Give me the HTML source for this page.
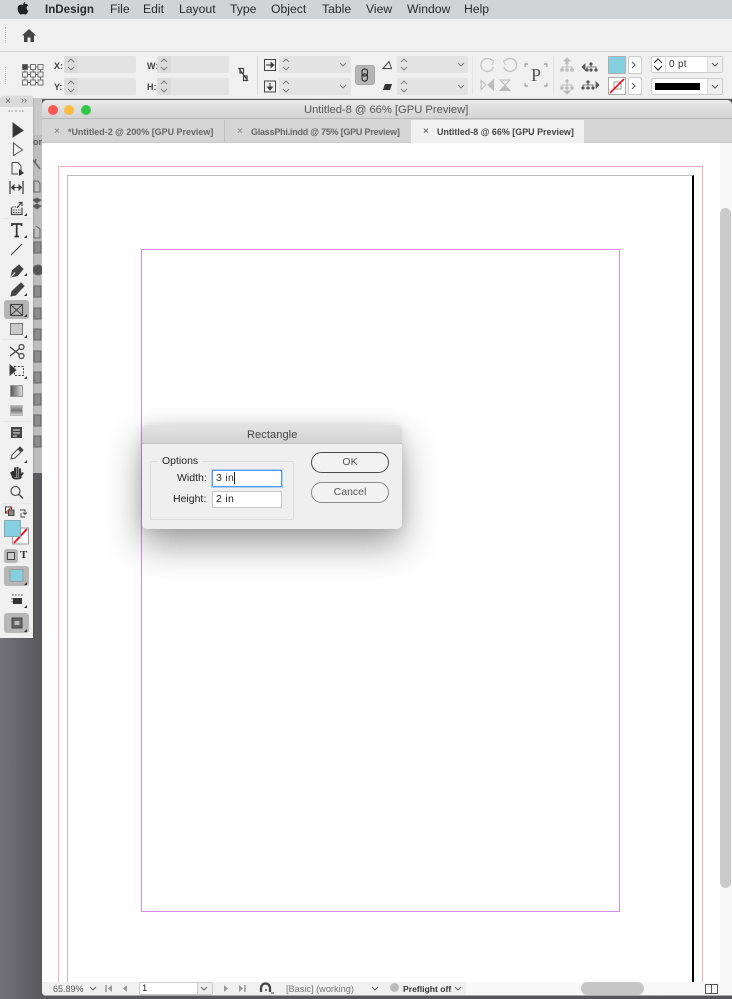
<!DOCTYPE html>
<html><head><meta charset="utf-8">
<style>
*{box-sizing:border-box}
html,body{margin:0;padding:0;width:732px;height:999px;overflow:hidden}
body{position:relative;background:linear-gradient(90deg,#737376,#59595c 42px,#555557);font-family:"Liberation Sans",sans-serif;color:#333}
.a{position:absolute}
.t{position:absolute;white-space:nowrap}
.menu{font-size:12.2px;color:#2a2a2a;top:2px;line-height:15px}
.f{position:absolute;background:#e3e3e3;border-radius:2px}
.lab{position:absolute;font-size:9px;font-weight:bold;color:#444;line-height:10px}
.tab{position:absolute;top:120px;height:23px;font-size:8.95px;font-weight:bold;color:#666;line-height:24px;white-space:nowrap}
svg{position:absolute;overflow:visible}
</style></head><body>
<!-- menu bar -->
<div class="a" style="left:0;top:0;width:732px;height:19px;background:#d2d3d5"></div>
<svg style="left:17px;top:1px" width="12" height="15" viewBox="0 0 12 15"><path d="M8.2 1C7 1.200 6.200 2.200 6.200 3.400 7.400 3.400 8.300 2.300 8.200 1ZM6.100 4C5.300 4 4.900 3.600 4 3.600 2 3.600.6 5.200.6 7.500c0 2.600 1.800 6 3.300 6 .8 0 1.200-.5 2.200-.5s1.300.5 2.200.5c1.300 0 2.600-2.200 3.100-3.800-2.300-1-2.500-4.300-.2-5.500-.6-1-1.700-1.500-2.700-1.500-1 0-1.600.4-2.400.4Z" fill="#222"/></svg>
<div class="t menu" style="left:45px;font-weight:bold;font-size:11.6px">InDesign</div>
<div class="t menu" style="left:110px">File</div>
<div class="t menu" style="left:143px">Edit</div>
<div class="t menu" style="left:179px">Layout</div>
<div class="t menu" style="left:230px">Type</div>
<div class="t menu" style="left:271px">Object</div>
<div class="t menu" style="left:322px">Table</div>
<div class="t menu" style="left:366px">View</div>
<div class="t menu" style="left:407px">Window</div>
<div class="t menu" style="left:464px">Help</div>
<!-- app bar -->
<div class="a" style="left:0;top:19px;width:732px;height:33px;background:#f0f0f0;border-bottom:1px solid #d0d0d0"></div>
<div class="a" style="left:5px;top:27px;height:16px;border-left:1px dotted #bbb"></div>
<svg style="left:21px;top:28px" width="16" height="15" viewBox="0 0 16 15"><path d="M8 1 1 7.500H3V14H6.500V9.500H9.500V14H13V7.500H15Z" fill="#444"/></svg>
<!-- control bar -->
<div class="a" style="left:0;top:52px;width:732px;height:47px;background:#f0f0f0;border-bottom:1px solid #d8d8d8"></div>
<div class="a" style="left:5px;top:67px;height:17px;border-left:1px dotted #bbb"></div>
<svg style="left:22px;top:64px" width="22" height="22" viewBox="0 0 22 22" fill="none" stroke="#666" stroke-width=".9"><rect x=".5" y=".5" width="5" height="5" fill="#444"/><rect x="8.500" y=".5" width="5" height="5"/><rect x="16" y=".5" width="5" height="5"/><rect x=".5" y="8" width="5" height="5"/><rect x="8.500" y="8" width="5" height="5"/><rect x="16" y="8" width="5" height="5"/><rect x=".5" y="16" width="5" height="5"/><rect x="8.500" y="16" width="5" height="5"/><rect x="16" y="16" width="5" height="5"/><path d="M5.500 3H8.500M13.500 3H16M5.500 10.500H8.500M13.500 10.500H16M5.500 18.500H8.500M13.500 18.500H16M3 5.500V8M3 13V16M11 5.500V8M11 13V16M18.500 5.500V8M18.500 13V16"/></svg>
<div class="lab" style="left:54px;top:61px">X:</div><div class="lab" style="left:54px;top:82px">Y:</div>
<div class="lab" style="left:147px;top:61px">W:</div><div class="lab" style="left:147px;top:82px">H:</div>
<div class="f" style="left:64px;top:56px;width:72px;height:17px"></div><div class="f" style="left:64px;top:78px;width:72px;height:17px"></div>
<div class="f" style="left:157px;top:56px;width:72px;height:17px"></div><div class="f" style="left:157px;top:78px;width:72px;height:17px"></div>
<div class="f" style="left:279px;top:56px;width:72px;height:17px"></div><div class="f" style="left:279px;top:78px;width:72px;height:17px"></div>
<div class="f" style="left:397px;top:56px;width:71px;height:17px"></div><div class="f" style="left:397px;top:78px;width:71px;height:17px"></div>
<div class="f" style="left:64px;top:56px;width:14px;height:17px;background:#dcdcdc"></div><div class="f" style="left:64px;top:78px;width:14px;height:17px;background:#dcdcdc"></div>
<div class="f" style="left:157px;top:56px;width:14px;height:17px;background:#dcdcdc"></div><div class="f" style="left:157px;top:78px;width:14px;height:17px;background:#dcdcdc"></div>
<svg style="left:0;top:0" width="732" height="100" fill="none" stroke="#777" stroke-width=".9">
<path d="M68 62 71 59 74 62M68 67 71 70 74 67M68 84 71 81 74 84M68 89 71 92 74 89M161 62 164 59 167 62M161 67 164 70 167 67M161 84 164 81 167 84M161 89 164 92 167 89M283 62 286 59 289 62M283 67 286 70 289 67M283 84 286 81 289 84M283 89 286 92 289 89M401 62 404 59 407 62M401 67 404 70 407 67M401 84 404 81 407 84M401 89 404 92 407 89"/>
<path d="M340 63 343 66 346 63M340 85 343 88 346 85M458 63 461 66 464 63M458 85 461 88 464 85"/>
</svg>
<svg style="left:237px;top:67px" width="13" height="15" viewBox="0 0 13 15" fill="none" stroke="#444" stroke-width="1.200"><path d="M3 1.500H6.500V6H3ZM6.500 9H10V13.500H6.500ZM1.500 1 11 14"/></svg>
<div class="a" style="left:257px;top:56px;height:39px;border-left:1px solid #dcdcdc"></div>
<svg style="left:264px;top:59px" width="12" height="34" viewBox="0 0 12 34" fill="none" stroke="#444"><rect x=".5" y=".5" width="11" height="11"/><rect x=".5" y="22" width="11" height="11"/><path d="M2 6H9" stroke-width="1.200"/><path d="M7 3.500 10 6 7 8.500Z" fill="#333"/><path d="M6 24V30" stroke-width="1.200"/><path d="M3.500 28 6 31 8.500 28Z" fill="#333"/></svg>
<div class="a" style="left:355px;top:65px;width:20px;height:20px;background:#b5b5b5;border-radius:3px;border:1px solid #a8a8a8"></div>
<svg style="left:361px;top:68px" width="8" height="14" viewBox="0 0 8 14" fill="none" stroke="#333" stroke-width="1.200"><rect x="1" y="1" width="5.500" height="7" rx="2.500"/><rect x="1" y="6" width="5.500" height="7" rx="2.500"/></svg>
<svg style="left:382px;top:60px" width="11" height="32" viewBox="0 0 11 32"><path d="M1 8.500H9.500L7 1.500Z" fill="none" stroke="#444" stroke-width="1"/><path d="M3 24H10L8 30H1Z" fill="#333"/></svg>
<div class="a" style="left:472px;top:56px;height:39px;border-left:1px solid #e4e4e4"></div>
<svg style="left:480px;top:56px" width="72" height="40" viewBox="0 0 72 40" fill="none" stroke="#c4c4c4" stroke-width="1.300"><path d="M12.500 5A6.500 6.500 0 1 0 13.500 11"/><path d="M10 3 14 5 12 9" stroke-width="1"/><path d="M25 5A6.500 6.500 0 1 1 24 11"/><path d="M27.500 3 23.500 5 25.500 9" stroke-width="1"/><path d="M1 24.500 6 29 1 33.500Z" stroke="#bbb" stroke-width="1"/><path d="M13.500 24 8 29 13.500 34Z" fill="#bbb" stroke="#bbb" stroke-width="1"/><path d="M20 24H30L25 29Z" stroke="#bbb" stroke-width="1"/><path d="M25 29.500 20 34.500H30Z" fill="#bbb" stroke="#bbb" stroke-width="1"/></svg>
<svg style="left:525px;top:63px" width="22" height="24" viewBox="0 0 22 24" fill="none" stroke="#888" stroke-width=".9"><path d="M0 4V1H3M19 1H22V4M0 20V23H3M19 23H22V20"/></svg>
<div class="t" style="left:531px;top:65px;font:18px 'Liberation Serif',serif;color:#555;line-height:20px">P</div>
<div class="a" style="left:553px;top:56px;height:39px;border-left:1px solid #e4e4e4"></div>
<svg style="left:560px;top:56px" width="44" height="40" viewBox="0 0 44 40">
<g fill="#bbb" stroke="#bbb"><path d="M7 2 10 5H4Z"/><circle cx="7" cy="7" r="1.200"/><path d="M7 8V11M2 13V11H12V13" fill="none"/><circle cx="2" cy="14" r="1.300"/><circle cx="7" cy="14" r="1.300"/><circle cx="12" cy="14" r="1.300"/>
<circle cx="7" cy="25" r="1.200"/><path d="M7 26V29M2 31V29H12V31" fill="none"/><circle cx="2" cy="32" r="1.300"/><circle cx="7" cy="32" r="1.300"/><circle cx="12" cy="32" r="1.300"/><path d="M4 35H10L7 38Z"/></g>
<g fill="#555" stroke="#555" stroke-width=".8"><circle cx="31" cy="8" r="1.200"/><path d="M31 9V11M27 13V11H36V13" fill="none"/><circle cx="27" cy="14" r="1.200"/><circle cx="31" cy="14" r="1.200"/><circle cx="36" cy="14" r="1.200"/><path d="M22 11 25 8V14Z"/>
<circle cx="28" cy="26" r="1.200"/><path d="M28 27V29M23 31V29H33V31" fill="none"/><circle cx="23" cy="32" r="1.200"/><circle cx="28" cy="32" r="1.200"/><circle cx="33" cy="32" r="1.200"/><path d="M39 29 36 26V32Z"/></g></svg>
<div class="a" style="left:608px;top:56px;width:18px;height:18px;background:#86cfdf;border:1px solid #b0b0b0"></div>
<div class="a" style="left:608px;top:77px;width:18px;height:18px;background:#fff;border:1px solid #aaa"></div>
<svg style="left:608px;top:77px" width="18" height="18" viewBox="0 0 18 18" fill="none"><rect x="6" y="5" width="7" height="7" stroke="#999"/><path d="M2 16 16 2" stroke="#f01020" stroke-width="1.600"/></svg>
<div class="a" style="left:628px;top:56px;width:14px;height:18px;background:#fff;border:1px solid #ccc;border-radius:2px"></div>
<div class="a" style="left:628px;top:77px;width:14px;height:18px;background:#fff;border:1px solid #ccc;border-radius:2px"></div>
<div class="a" style="left:651px;top:56px;width:72px;height:17px;background:#fff;border:1px solid #ccc;border-radius:2px"></div>
<div class="a" style="left:651px;top:78px;width:72px;height:17px;background:#fff;border:1px solid #ccc;border-radius:2px"></div>
<div class="a" style="left:665px;top:57px;width:1px;height:15px;background:#ddd"></div>
<div class="a" style="left:707px;top:57px;width:15px;height:15px;background:#efefef;border-left:1px solid #ddd"></div>
<div class="a" style="left:707px;top:79px;width:15px;height:15px;background:#efefef;border-left:1px solid #ddd"></div>
<div class="t" style="left:669px;top:59px;font-size:10px;color:#333;line-height:12px;letter-spacing:.3px">0 pt</div>
<div class="a" style="left:655px;top:83px;width:45px;height:7px;background:#000"></div>
<svg style="left:0;top:0" width="732" height="100" fill="none" stroke="#555" stroke-width="1"><path d="M632 62 635 65 632 68M632 83 635 86 632 89" /><path d="M654 63 658 59 662 63M654 66 658 70 662 66" stroke-width="1.200" stroke="#333"/><path d="M712 63 715 66 718 63M712 85 715 88 718 85"/></svg>
<!-- back window strip under toolbox -->
<div class="a" style="left:30px;top:98px;width:12px;height:375px;background:#c9c9c9"></div>
<div class="a" style="left:33px;top:135px;width:9px;height:338px;background:#bdbdbd"></div>
<div class="t" style="left:33px;top:137px;font-size:9px;font-weight:bold;color:#555">or</div>
<svg style="left:32px;top:155px" width="10" height="300" viewBox="0 0 10 300" fill="#8d8d8d" stroke="#666"><path d="M1 5 8 14M4 4 3 8" stroke-width="1.500" fill="none"/><path d="M2 26H6L8 29V37H2Z" fill="none"/><path d="M1 45 5 43 9 45 5 48ZM1 51 5 49 9 51 5 54Z" fill="#555"/><path d="M2 74V83H8V74L4 71" fill="none"/><rect x="2" y="87" width="7" height="11"/><circle cx="6" cy="115" r="5" fill="#555"/><rect x="2" y="131" width="7" height="11"/><rect x="2" y="153" width="7" height="11"/><rect x="2" y="174" width="7" height="11"/><rect x="2" y="196" width="7" height="11"/><rect x="2" y="217" width="7" height="11"/><rect x="2" y="239" width="7" height="11"/><rect x="2" y="260" width="7" height="11"/><rect x="2" y="281" width="7" height="11"/></svg>
<!-- document window -->
<div class="a" style="left:42px;top:100px;width:690px;height:896px;background:#fff;border-radius:5px 5px 0 4px"></div>
<div class="a" style="left:42px;top:100px;width:690px;height:19px;background:linear-gradient(#e9e9e9,#d3d3d3);border-radius:5px 5px 0 0;border-bottom:1px solid #b9b9b9"></div>
<div class="a" style="left:48px;top:105px;width:10px;height:10px;border-radius:50%;background:#fc5753"></div>
<div class="a" style="left:64px;top:105px;width:10px;height:10px;border-radius:50%;background:#fdbc40"></div>
<div class="a" style="left:81px;top:105px;width:10px;height:10px;border-radius:50%;background:#33c748"></div>
<div class="t" style="left:304px;top:103px;font-size:11.2px;color:#555;line-height:14px">Untitled-8 @ 66% [GPU Preview]</div>
<div class="a" style="left:42px;top:119px;width:690px;height:24px;background:#d5d5d5;border-bottom:1px solid #c8c8c8"></div>
<div class="a" style="left:411px;top:120px;width:173px;height:23px;background:#f0f0f0"></div>
<div class="a" style="left:224px;top:120px;width:1px;height:22px;background:#c0c0c0"></div>
<div class="tab" style="left:54px;color:#777;font-weight:normal;font-size:10px">×</div>
<div class="tab" style="left:68px">*Untitled-2 @ 200% [GPU Preview]</div>
<div class="tab" style="left:237px;color:#777;font-weight:normal;font-size:10px">×</div>
<div class="tab" style="left:251px;letter-spacing:-.2px">GlassPhi.indd @ 75% [GPU Preview]</div>
<div class="tab" style="left:423px;color:#444;font-weight:normal;font-size:10px">×</div>
<div class="tab" style="left:437px;color:#444">Untitled-8 @ 66% [GPU Preview]</div>
<!-- canvas -->
<div class="a" style="left:720px;top:143px;width:12px;height:839px;background:#f8f8f8"></div>
<div class="a" style="left:720px;top:208px;width:11px;height:680px;background:#cbcbcb;border-radius:6px"></div>
<div class="a" style="left:58px;top:166px;width:645px;height:816px;border:1px solid #fcaebb;border-bottom:0"></div>
<div class="a" style="left:67px;top:175px;width:627px;height:807px;border:1px solid #bcbcbc;border-right:2px solid #000;border-bottom:0"></div>
<div class="a" style="left:141px;top:249px;width:479px;height:663px;border:1px solid #d98be8"></div>
<!-- dialog -->
<div class="a" style="left:142px;top:425px;width:260px;height:104px;border-radius:5px;background:#efefef;box-shadow:0 16px 36px rgba(0,0,0,.38),0 0 12px rgba(0,0,0,.1)"></div>
<div class="a" style="left:142px;top:425px;width:260px;height:19px;border-radius:5px 5px 0 0;background:linear-gradient(#e3e3e3,#d2d2d2);border-bottom:1px solid #c4c4c4"></div>
<div class="t" style="left:247px;top:428px;font-size:11px;color:#444;line-height:14px;letter-spacing:.1px">Rectangle</div>
<div class="a" style="left:150px;top:461px;width:144px;height:59px;border:1px solid #dcdcdc;border-radius:2px"></div>
<div class="t" style="left:158px;top:455px;padding:0 4px;background:#efefef;font-size:10.500px;color:#222;line-height:13px">Options</div>
<div class="t" style="left:177px;top:472px;font-size:10.500px;color:#222;line-height:13px">Width:</div>
<div class="t" style="left:173px;top:493px;font-size:10.500px;color:#222;line-height:13px">Height:</div>
<div class="a" style="left:212px;top:470px;width:70px;height:17px;background:#fff;border:1px solid #5a9df0;box-shadow:0 0 0 1px #a9cdf6"></div>
<div class="a" style="left:212px;top:491px;width:70px;height:17px;background:#fff;border:1px solid #c9c9c9"></div>
<div class="t" style="left:216px;top:472px;font-size:10.500px;color:#333;line-height:13px;letter-spacing:.3px">3 in</div>
<div class="a" style="left:234px;top:472px;width:1px;height:12px;background:#222"></div>
<div class="t" style="left:216px;top:493px;font-size:10.500px;color:#222;line-height:13px;letter-spacing:.3px">2 in</div>
<div class="a" style="left:311px;top:452px;width:78px;height:21px;border-radius:11px;background:#f2f2f2;border:1.500px solid #4a4a4a;text-align:center;font-size:10.500px;color:#555;line-height:19px">OK</div>
<div class="a" style="left:311px;top:482px;width:78px;height:21px;border-radius:11px;background:#f2f2f2;border:1px solid #8a8a8a;text-align:center;font-size:10.500px;color:#555;line-height:19px">Cancel</div>
<!-- status bar -->
<div class="a" style="left:42px;top:982px;width:690px;height:14px;background:#f0f0f0;border-bottom:1px solid #a8a8a8;border-radius:0 0 0 4px"></div>
<div class="a" style="left:466px;top:982px;width:266px;height:13px;background:#f8f8f8"></div>
<div class="t" style="left:53px;top:983px;font-size:9px;color:#555;line-height:12px">65.89%</div>
<div class="a" style="left:139px;top:982px;width:74px;height:13px;background:#fff;border:1px solid #ccc;border-radius:2px"></div>
<div class="a" style="left:197px;top:983px;width:15px;height:11px;background:#eee;border-left:1px solid #ccc"></div>
<div class="t" style="left:142px;top:983px;font-size:9.500px;color:#222;line-height:12px">1</div>
<div class="t" style="left:286px;top:983px;font-size:9.2px;color:#777;line-height:12px">[Basic] (working)</div>
<div class="a" style="left:390px;top:983px;width:9px;height:9px;border-radius:50%;background:#bcbcbc"></div>
<div class="t" style="left:403px;top:983px;font-size:8.6px;font-weight:bold;color:#333;line-height:12px">Preflight off</div>
<div class="a" style="left:581px;top:982px;width:63px;height:13px;border-radius:7px;background:#c6c6c6"></div>
<svg style="left:0;top:970px" width="732" height="29" viewBox="0 970 732 29" fill="none" stroke="#666">
<path d="M90 987 93 990 96 987M201 987 204 990 207 987M372 987 375 990 378 987M455 987 458 990 461 987"/>
<path d="M106 985V992" stroke="#999" stroke-width="1.500"/><path d="M112 985 108 988.500 112 992ZM127 985 123 988.500 127 992ZM224 985 228 988.500 224 992ZM239 985 243 988.500 239 992Z" fill="#999" stroke="none"/><path d="M245 985V992" stroke="#999" stroke-width="1.500"/>
<path d="M261 992V988A4.500 4.500 0 0 1 270 988V992" stroke="#444" stroke-width="2.200"/><path d="M265 990H267" stroke="#444" stroke-width="1.500"/><path d="M271 993H274" stroke="#444"/>
<rect x="705.500" y="984.500" width="12" height="9" stroke="#555"/><path d="M711.500 984.500V993.500" stroke="#555"/>
</svg>
<!-- toolbox -->
<div class="a" style="left:0;top:96px;width:33px;height:542px;background:#f0f0f0;border-radius:3px 3px 0 0;box-shadow:1px 0 1px rgba(0,0,0,.12)"></div>
<div class="a" style="left:0;top:96px;width:33px;height:11px;background:#dadada;border-radius:3px 3px 0 0"></div>
<div class="t" style="left:5px;top:96px;font-size:10px;color:#555;line-height:11px">×</div>
<div class="t" style="left:21px;top:95px;font-size:9px;color:#555;line-height:11px">››</div>
<div class="a" style="left:8px;top:110px;width:16px;border-top:2px dotted #c8c8c8"></div>
<div class="a" style="left:4px;top:300px;width:25px;height:19px;background:#b5b5b5;border-radius:3px"></div>
<div class="a" style="left:4px;top:566px;width:25px;height:20px;background:#b7b7b7;border-radius:3px"></div>
<div class="a" style="left:4px;top:613px;width:25px;height:20px;background:#b7b7b7;border-radius:3px"></div>
<div class="a" style="left:2px;top:218px;width:29px;border-top:1px solid #e6e6e6"></div>
<div class="a" style="left:2px;top:339px;width:29px;border-top:1px solid #e6e6e6"></div>
<div class="a" style="left:2px;top:421px;width:29px;border-top:1px solid #e6e6e6"></div>
<div class="a" style="left:2px;top:503px;width:29px;border-top:1px solid #e6e6e6"></div>
<svg style="left:0;top:96px" width="33" height="542" viewBox="0 96 33 542" fill="none" stroke="#444" stroke-width="1">
<path d="M13 123 23 130.500 13 137Z" fill="#333"/>
<path d="M13.500 143 22.500 150 13.500 155.500Z" stroke="#555"/>
<path d="M12 162.500H18L21 166V172M12 162.500V174H18" stroke="#444"/><path d="M19 169 24 173 19 176Z" fill="#333" stroke="none"/>
<path d="M10 181V194M23 181V194" stroke-width="1.300"/><path d="M12 187.500H21" /><path d="M14 185 11.500 187.500 14 190ZM19 185 21.500 187.500 19 190Z" fill="#333"/>
<path d="M11.500 207.500V214.500H22V207.500" stroke-width="1.200"/><path d="M12 207H16M13 210H21M13 212.500H21" stroke-dasharray="1.500 1"/><path d="M17 208 21 203M18.500 202.500H22V206" stroke-width="1.200"/>
<path d="M12 226V224H21.500V226M16.700 224V236.500M14.500 236.500H19" stroke-width="1.700" stroke="#333"/>
<path d="M11 255 22 244" stroke-width="1.100"/>
<path d="M11 277 12.500 270.500 19 265 23 269 17.500 275.500Z" fill="#444"/><path d="M11 277 15 272.500" stroke="#f0f0f0"/>
<path d="M11 296 12 291.500 21 283 24 286 15.500 295Z" fill="#444"/>
<rect x="10.500" y="304.500" width="12" height="11" stroke-width="1.100"/><path d="M10.500 304.500 22.500 315.500M22.500 304.500 10.500 315.500"/>
<rect x="10.500" y="323.500" width="12" height="11" fill="#c9c9c9" stroke="#777"/>
<circle cx="21.500" cy="347" r="2.500" stroke-width="1.200"/><circle cx="21.500" cy="356" r="2.500" stroke-width="1.200"/><path d="M10 347 19.500 354.500M10 356 19.500 348.500" stroke-width="1.300"/>
<path d="M10 365 16 370 10 375Z" fill="#333"/><rect x="14.500" y="366.500" width="9" height="9" stroke-dasharray="2 1.500"/>
<rect x="10.500" y="385.500" width="12" height="11" fill="url(#g1)" stroke="#999"/>
<rect x="10.500" y="405.500" width="12" height="10" fill="url(#g2)" stroke="#bbb"/>
<rect x="11" y="427" width="11" height="11" fill="#444" stroke="none"/><path d="M13 430H20M13 433H20M13 436H17" stroke="#eee"/>
<path d="M11 459 12 455 18 449 21 452 15 458Z" stroke-width="1"/><path d="M18 449 20 447 23 450 21 452" fill="#444"/>
<path d="M13 478V471M15 477V467.500M17.500 477V467M20 477V468.500M13 477 11 472M20 477 23 472.500 M13 477C13 479 20 479 21 477" stroke-width="2" stroke="#333"/>
<circle cx="15.500" cy="491" r="4.500" stroke-width="1.100"/><path d="M19 494.500 23 498.500" stroke-width="1.500"/>
<rect x="5.500" y="507" width="6" height="6" fill="#fff" stroke="#444"/><path d="M5.500 513 11.500 507" stroke="#e22"/><rect x="8.500" y="510" width="5.500" height="5.500" fill="#888" stroke="#444"/>
<path d="M20 510H25V514M23 512.500 25 514.500 27 512.500M25 517H21V513" stroke-width=".9"/>
<rect x="12.500" y="528" width="16" height="16" fill="#fff" stroke="#999"/>
<path d="M14 543 27 529" stroke="#f01020" stroke-width="2"/>
<rect x="4.500" y="520.500" width="16" height="16" fill="#86cfdf" stroke="#7fa9b6"/>
<rect x="4.500" y="549.500" width="13" height="13" rx="2" fill="#b5b5b5" stroke="#bbb"/><rect x="7.500" y="552.500" width="7" height="7" fill="#ccc" stroke="#444"/>
<rect x="10" y="569.500" width="13" height="12" fill="#86cfdf" stroke="#9a9a9a"/>
<rect x="13" y="598" width="9" height="6" fill="#333" stroke="none"/><path d="M12 595H23M12 598V604" stroke-dasharray="1.500 1.500"/>
<rect x="12" y="618" width="10" height="10" fill="#666" stroke="#444"/><rect x="14.500" y="621" width="5" height="4" fill="#b7b7b7" stroke="none"/>
<g fill="#333" stroke="none"><path d="M27 213V216H24ZM27 235V238H24ZM27 273V276H24ZM27 293V296H24ZM27 314V317H24ZM27 335V338H24ZM27 376V379H24ZM27 460V463H24ZM27 582V585H24ZM27 605V608H24ZM27 629V632H24Z"/></g>
</svg>
<svg width="0" height="0" style="position:absolute"><defs><linearGradient id="g1"><stop offset="0" stop-color="#555"/><stop offset="1" stop-color="#e0e0e0"/></linearGradient><linearGradient id="g2" x2="0" y2="1"><stop offset="0" stop-color="#bbb"/><stop offset=".5" stop-color="#777"/><stop offset="1" stop-color="#ddd"/></linearGradient></defs></svg>
<div class="t" style="left:20px;top:549px;font:bold 11px 'Liberation Serif',serif;color:#333;line-height:13px">T</div>
</body></html>
